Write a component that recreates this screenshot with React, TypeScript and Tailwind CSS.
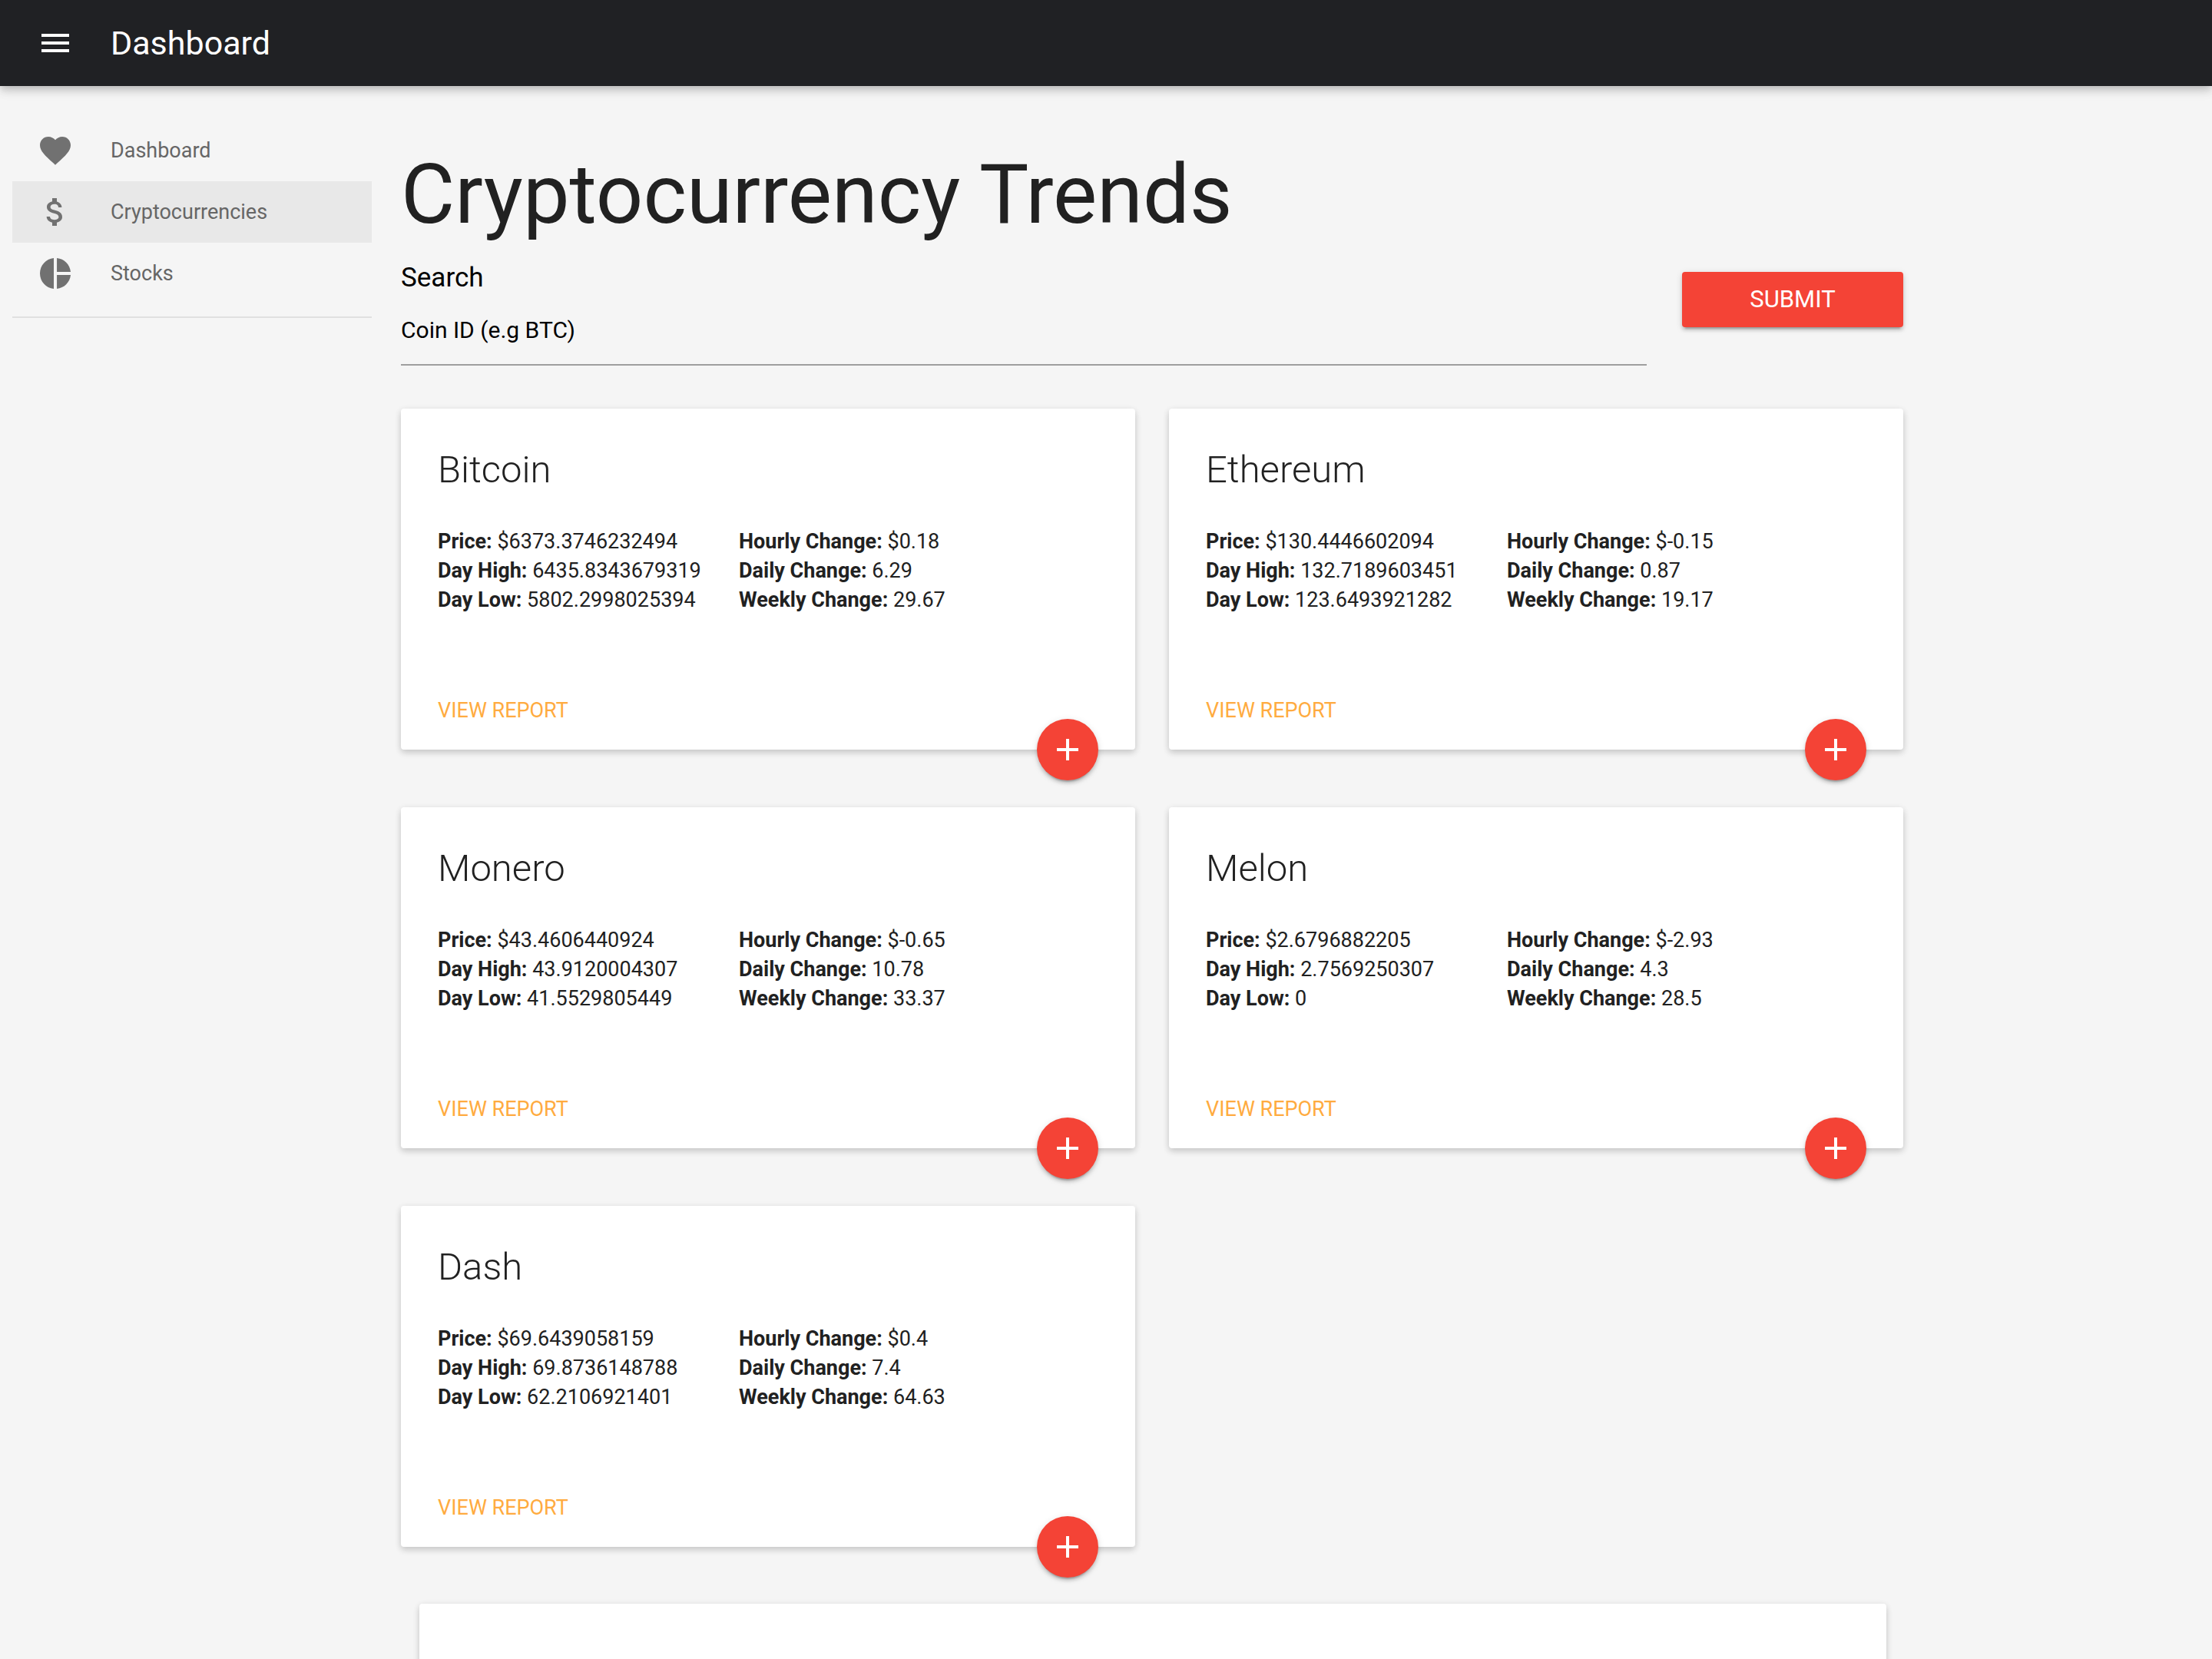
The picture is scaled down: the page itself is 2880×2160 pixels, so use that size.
import type { IconType } from "react-icons";
import { MdAdd, MdAttachMoney, MdFavorite, MdMenu, MdPieChart } from "react-icons/md";

type NavItem = { label: string; icon: IconType; active?: boolean };

type Coin = {
  name: string;
  price: string;
  high: string;
  low: string;
  hourly: string;
  daily: string;
  weekly: string;
};

const navItems: NavItem[] = [
  { label: "Dashboard", icon: MdFavorite },
  { label: "Cryptocurrencies", icon: MdAttachMoney, active: true },
  { label: "Stocks", icon: MdPieChart },
];

const coins: Coin[] = [
  { name: "Bitcoin", price: "$6373.3746232494", high: "6435.8343679319", low: "5802.2998025394", hourly: "$0.18", daily: "6.29", weekly: "29.67" },
  { name: "Ethereum", price: "$130.4446602094", high: "132.7189603451", low: "123.6493921282", hourly: "$-0.15", daily: "0.87", weekly: "19.17" },
  { name: "Monero", price: "$43.4606440924", high: "43.9120004307", low: "41.5529805449", hourly: "$-0.65", daily: "10.78", weekly: "33.37" },
  { name: "Melon", price: "$2.6796882205", high: "2.7569250307", low: "0", hourly: "$-2.93", daily: "4.3", weekly: "28.5" },
  { name: "Dash", price: "$69.6439058159", high: "69.8736148788", low: "62.2106921401", hourly: "$0.4", daily: "7.4", weekly: "64.63" },
];

function Header() {
  return (
    <header className="relative flex h-28 items-center bg-[#202124] px-12 text-white shadow-[0_4px_8px_-2px_rgba(0,0,0,0.12),0_8px_10px_0_rgba(0,0,0,0.1),0_2px_20px_0_rgba(0,0,0,0.08)]">
      <button type="button" aria-label="Open menu" className="mr-12">
        <MdMenu className="size-12" />
      </button>
      <span className="text-[43px] leading-[44px]">Dashboard</span>
    </header>
  );
}

function Sidebar() {
  return (
    <nav aria-label="Main" className="w-[484px] shrink-0 pt-11 pl-4">
      <ul className="border-b-2 border-[#e0e0e0] pb-4">
        {navItems.map(({ label, icon: Icon, active }) => (
          <li key={label}>
            <a
              href="#"
              aria-current={active ? "page" : undefined}
              className={
                active
                  ? "flex h-20 items-center gap-12 bg-[#e8e8e8] px-8 text-[27px] leading-[38px] text-[#666666]"
                  : "flex h-20 items-center gap-12 px-8 text-[27px] leading-[38px] text-[#666666]"
              }
            >
              <Icon className="size-12 text-[#717171]" />
              {label}
            </a>
          </li>
        ))}
      </ul>
    </nav>
  );
}

function SearchForm() {
  return (
    <form className="mt-7 flex items-start gap-[46px]" onSubmit={(event) => event.preventDefault()}>
      <div className="flex-1">
        <label htmlFor="coin" className="block text-[35px] leading-[44px] text-black">
          Search
        </label>
        <input
          id="coin"
          type="text"
          placeholder="Coin ID (e.g BTC)"
          className="block h-[92px] w-full border-b-2 border-[#9e9e9e] bg-transparent text-[30px] text-black outline-none placeholder:text-black"
        />
      </div>
      <button
        type="submit"
        className="mt-3.5 h-18 w-72 rounded bg-[#f44336] text-[31px] leading-[38px] text-white uppercase shadow-[0_6px_2px_-4px_rgba(0,0,0,0.2),0_4px_4px_0_rgba(0,0,0,0.14),0_2px_10px_0_rgba(0,0,0,0.12)]"
      >
        Submit
      </button>
    </form>
  );
}

function Stat({ label, value }: { label: string; value: string }) {
  return (
    <p>
      <b className="font-bold">{label}:</b> {value}
    </p>
  );
}

function CoinCard({ coin }: { coin: Coin }) {
  return (
    <article className="relative rounded bg-white shadow-[0_4px_8px_0_rgba(0,0,0,0.14),0_2px_10px_0_rgba(0,0,0,0.08)]">
      <div className="px-12 pt-12 pb-[74px]">
        <h2 className="mb-[42px] text-[49px] leading-[64px] font-light">{coin.name}</h2>
        <div className="flex text-[27px] leading-[38px]">
          <div className="w-98">
            <Stat label="Price" value={coin.price} />
            <Stat label="Day High" value={coin.high} />
            <Stat label="Day Low" value={coin.low} />
          </div>
          <div>
            <Stat label="Hourly Change" value={coin.hourly} />
            <Stat label="Daily Change" value={coin.daily} />
            <Stat label="Weekly Change" value={coin.weekly} />
          </div>
        </div>
      </div>
      <div className="px-12 py-8 text-[27px] leading-[38px]">
        <a href="#" className="text-[#ffab40] uppercase">
          View Report
        </a>
      </div>
      <button
        type="button"
        aria-label={`Add ${coin.name}`}
        className="absolute right-12 -bottom-10 flex size-20 items-center justify-center rounded-full bg-[#f44336] text-white shadow-[0_6px_2px_-4px_rgba(0,0,0,0.2),0_4px_4px_0_rgba(0,0,0,0.14),0_2px_10px_0_rgba(0,0,0,0.12)]"
      >
        <MdAdd className="size-12" />
      </button>
    </article>
  );
}

export default function App() {
  return (
    <div className="flex h-screen flex-col overflow-hidden bg-[#f5f5f5] font-['Roboto',sans-serif] text-[#212121]">
      <Header />
      <div className="flex flex-1 overflow-hidden">
        <Sidebar />
        <main className="ml-[38px] max-w-[1956px] flex-1 pt-[82px]">
          <h1 className="text-[108px] leading-[118px]">Cryptocurrency Trends</h1>
          <SearchForm />
          <section aria-label="Coins" className="mt-14 grid grid-cols-2 gap-x-11 gap-y-[75px]">
            {coins.map((coin) => (
              <CoinCard key={coin.name} coin={coin} />
            ))}
          </section>
          <div className="mt-[74px] mr-[22px] ml-6 h-120 rounded bg-white shadow-[0_4px_8px_0_rgba(0,0,0,0.14),0_2px_10px_0_rgba(0,0,0,0.08)]" />
        </main>
      </div>
    </div>
  );
}
